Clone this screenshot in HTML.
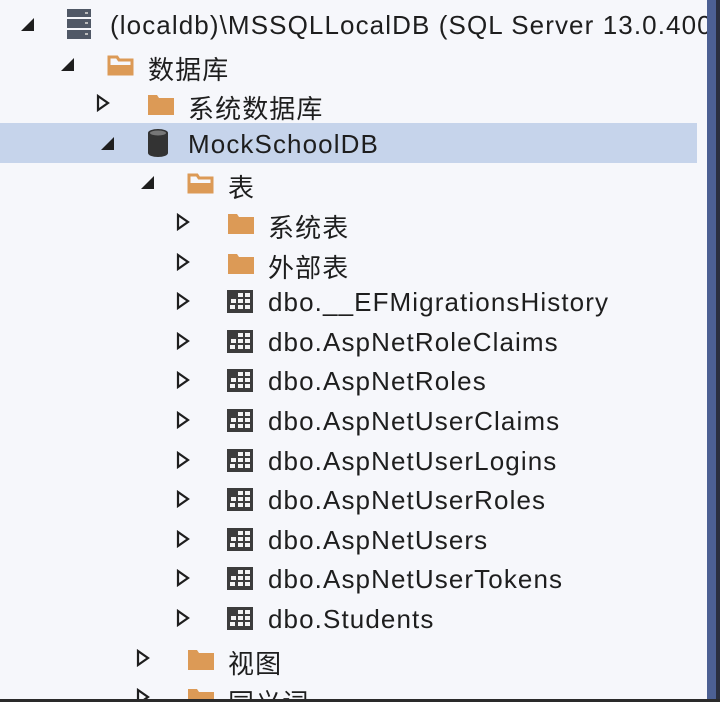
<!DOCTYPE html>
<html><head><meta charset="utf-8"><style>
html,body{margin:0;width:720px;height:702px;overflow:hidden}
body{background:#f6f7fb;position:relative;font-family:"Liberation Sans","Noto Sans CJK SC",sans-serif;color:#1e1e1e}
.row{position:absolute;left:0;height:40px;width:697px}
.sel{background:#c6d4eb}
.t{position:absolute;font-size:26px;top:6px;white-space:nowrap;letter-spacing:1.1px}
.ic{position:absolute;top:8px}
.ar{position:absolute;top:11px}
#rb{position:absolute;left:707px;top:0;width:9px;height:702px;background:#4c6093}
#rb2{position:absolute;left:716px;top:0;width:4px;height:702px;background:#2a2f3f}
#bb{position:absolute;left:0;top:699px;width:720px;height:3px;background:#2a2a2a}
</style></head><body>
<div id="rows"></div>
<script>
var D='<svg width="14" height="18" viewBox="0 0 14 18"><path d="M2 2 L12 9 L2 16 Z" fill="none" stroke="#1e1e1e" stroke-width="2.2"/></svg>';
var E='<svg width="18" height="18" viewBox="0 0 18 18"><path d="M16 3 L16 16 L3 16 Z" fill="#1e1e1e"/></svg>';
var FO='<svg width="30" height="26" viewBox="0 0 30 26"><path d="M2 4 h9 l2 3 h15 v17 h-26z" fill="#dc9a56"/></svg>';
var FOP='<svg width="30" height="26" viewBox="0 0 30 26"><path d="M3 5 h8 l2 3 h13 v14 h-23z" fill="none" stroke="#dc9a56" stroke-width="3"/><path d="M3 13 h24 l-3 9 h-21z" fill="#dc9a56"/></svg>';
var TB='<svg width="28" height="26" viewBox="0 0 28 26"><rect x="1" y="1" width="26" height="23" fill="#3c3c3c"/><g fill="#f4f4f4"><rect x="12" y="4" width="5" height="4"/><rect x="19" y="4" width="5" height="4"/><rect x="5" y="10" width="5" height="4"/><rect x="12" y="10" width="5" height="4"/><rect x="19" y="10" width="5" height="4"/><rect x="4" y="16" width="5" height="4"/><rect x="12" y="16" width="5" height="4"/><rect x="19" y="16" width="5" height="4"/></g></svg>';
var DB='<svg width="24" height="30" viewBox="0 0 24 30"><path d="M2 5 a10 4 0 0 1 20 0 v20 a10 4 0 0 1 -20 0z" fill="#333"/><ellipse cx="12" cy="5" rx="8" ry="2.5" fill="#777"/></svg>';
var SV='<svg width="26" height="32" viewBox="0 0 26 32"><g fill="#505866"><rect x="1" y="1" width="24" height="8"/><rect x="1" y="11" width="24" height="9"/><rect x="1" y="22" width="24" height="9"/></g><g fill="#bbb"><rect x="19" y="4" width="3" height="2"/><rect x="19" y="14" width="3" height="2"/><rect x="19" y="25" width="3" height="2"/></g></svg>';
var rows=[
[0,E,SV,'(localdb)\\MSSQLLocalDB (SQL Server 13.0.4001',0],
[1,E,FOP,'数据库'],
[2,D,FO,'系统数据库'],
[2,E,DB,'MockSchoolDB',1],
[3,E,FOP,'表'],
[4,D,FO,'系统表'],
[4,D,FO,'外部表'],
[4,D,TB,'dbo.__EFMigrationsHistory'],
[4,D,TB,'dbo.AspNetRoleClaims'],
[4,D,TB,'dbo.AspNetRoles'],
[4,D,TB,'dbo.AspNetUserClaims'],
[4,D,TB,'dbo.AspNetUserLogins'],
[4,D,TB,'dbo.AspNetUserRoles'],
[4,D,TB,'dbo.AspNetUsers'],
[4,D,TB,'dbo.AspNetUserTokens'],
[4,D,TB,'dbo.Students'],
[3,D,FO,'视图'],
[3,D,FO,'同义词']];
var h='';
rows.forEach(function(r,i){
 var y=4+i*39.6, l=r[0], ix=(l==0?66:106+(l-1)*40), tx=(l==0?110:148+(l-1)*40);
 var axx=(r[1]==D)?(96+(l-2)*40):(18+l*40);
 if(l==0) axx=18;
 h+='<div class="row'+(r[4]?' sel':'')+'" style="top:'+y+'px">'+
 '<div class="ar" style="left:'+axx+'px">'+r[1]+'</div>'+
 '<div class="ic" style="left:'+ix+'px;'+(l==0?'top:4px':'')+(r[2]==DB?'top:5px':'')+'">'+r[2]+'</div>'+
 '<div class="t" style="left:'+tx+'px">'+r[3]+'</div></div>';
});
document.getElementById('rows').innerHTML=h;
</script>
<div id="rb"></div><div id="rb2"></div><div id="bb"></div>
</body></html>
